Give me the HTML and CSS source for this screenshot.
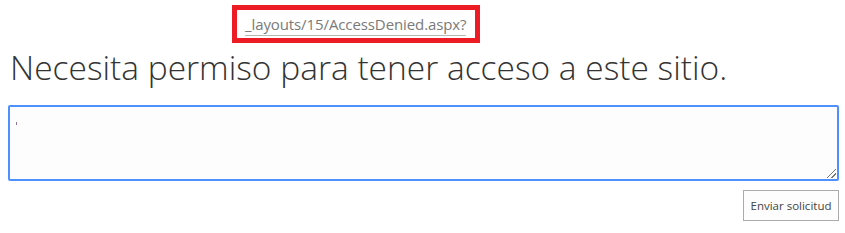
FILE: index.html
```html
<!DOCTYPE html>
<html lang="es">
<head>
<meta charset="utf-8">
<link rel="stylesheet" href="styles.css">
</head>
<body>
<div class="page">
  <div class="url-row">
    <div class="url-box"><span class="url-text">_layouts/15/AccessDenied.aspx?</span></div>
  </div>
  <h1 class="title">Necesita permiso para tener acceso a este sitio.</h1>
  <div class="message"><span class="dot"></span><span class="grip"></span></div>
  <div class="actions">
    <button class="send">Enviar solicitud</button>
  </div>
</div>
</body>
</html>
```
FILE: styles.css
```css
* { box-sizing: border-box; }
html, body { margin: 0; padding: 0; background: #fff; }
body { font-family: "Open Sans", "Segoe UI", "Liberation Sans", sans-serif; color: #444; }
.page { display: flex; flex-direction: column; padding: 5px 6px 0 8px; }
.url-row { display: flex; padding-left: 224px; }
.url-box {
  width: 248px; height: 38px;
  border: 5px solid #ed1c24;
  padding: 3px 0 0 8px;
}
.url-text {
  display: inline-block;
  font-size: 15px; line-height: 21px;
  color: #7a7a7a;
  border-bottom: 1px solid #b8b8b8;
  letter-spacing: -0.1px;
}
.title {
  margin: 1px 0 0 2px;
  font-weight: 300;
  font-size: 33.5px;
  line-height: 46px;
  color: #333;
}
.message {
  position: relative;
  margin-top: 15px;
  height: 76px;
  border: 2px solid #4d90fe;
  border-radius: 2px;
  background: #fdfdfd;
}
.dot { position: absolute; left: 6px; top: 15px; width: 1px; height: 3px; background: #8a78a0; }
.grip {
  position: absolute; right: 1px; bottom: 1px; width: 9px; height: 9px;
  background: linear-gradient(135deg, transparent 45%, #777 45%, #777 55%, transparent 55%, transparent 70%, #777 70%, #777 80%, transparent 80%);
}
.actions { display: flex; justify-content: flex-end; margin-top: 9px; }
.send {
  width: 96px; height: 31px;
  border: 1px solid #ababab;
  background: #fdfdfd;
  font-family: inherit;
  font-size: 11.5px;
  color: #444;
  padding: 0;
}
```
